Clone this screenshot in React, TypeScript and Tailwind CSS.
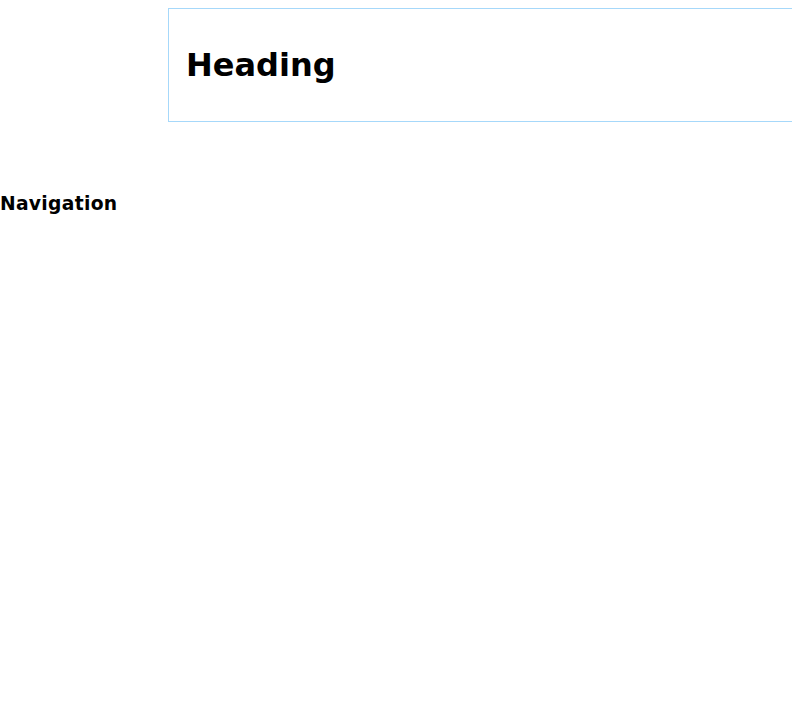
export default function App() {
  return (
    <div className="min-h-[725px] bg-white font-['DejaVu_Sans',sans-serif] text-black">
      <header className="mt-2 ml-[168px] w-[624px] border-y border-l border-[#a6d8fa] pt-[38px] pb-[37px] pl-[17px] pr-4">
        <h1 className="text-[32px] leading-[37px] font-bold">Heading</h1>
      </header>
      <nav className="mt-[71px]">
        <h3 className="text-[18.72px] leading-[22px] font-bold tracking-[0.3px]">Navigation</h3>
      </nav>
    </div>
  )
}
